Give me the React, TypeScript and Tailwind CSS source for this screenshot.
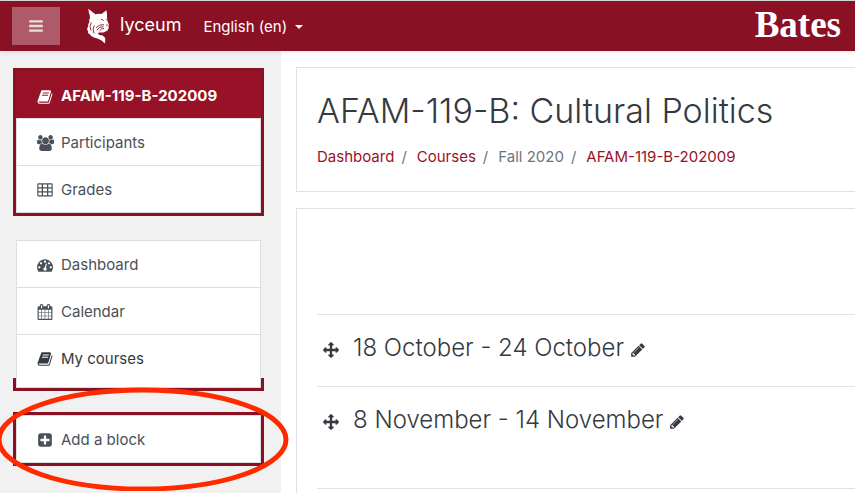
import { ReactNode } from "react";
import clsx from "clsx";

const ICONS = {
   book: "M1703 478q40 57 18 129l-275 906q-19 64-76.5 107.5t-122.5 43.5h-923q-77 0-148.5-53.5t-99.5-131.5q-24-67-2-127 0-4 3-27t4-37q1-8-3-21.5t-3-19.5q2-11 8-21t16.5-23.5 16.5-23.5q23-38 45-91.5t30-91.5q3-10 .5-30t-.5-28q3-11 17-28t17-23q21-36 42-92t25-90q1-9-2.5-32t.5-28q4-13 22-30.5t22-22.5q19-26 42.5-84.5t27.5-96.5q1-8-3-25.5t-2-26.5q2-8 9-18t18-23 17-21q8-12 16.5-30.5t15-35 16-36 19.5-32 26.5-23.5 36-11.5 47.5 5.5l-1 3q38-9 51-9h761q74 0 114 56t18 130l-274 906q-36 119-71.5 153.5t-128.5 34.5h-869q-27 0-38 15-11 16-1 43 24 70 144 70h923q29 0 56-15.5t35-41.5l300-987q7-22 5-57 38 15 59 43zm-1064 2q-4 13 2 22.5t20 9.5h608q13 0 25.5-9.5t16.5-22.5l21-64q4-13-2-22.5t-20-9.5h-608q-13 0-25.5 9.5t-16.5 22.5zm-83 256q-4 13 2 22.5t20 9.5h608q13 0 25.5-9.5t16.5-22.5l21-64q4-13-2-22.5t-20-9.5h-608q-13 0-25.5 9.5t-16.5 22.5z",
   users: "M593 896q-162 5-265 128h-134q-82 0-138-40.5t-56-118.5q0-353 124-353 6 0 43.5 21t97.5 42.5 119 21.5q67 0 133-23-5 37-5 66 0 159 93 293zm1071 637q0 120-73 189.5t-194 69.5h-874q-121 0-194-69.5t-73-189.5q0-53 3.5-103.5t14-109 26.5-108.5 43-97.5 62-81 85.5-53.5 111.5-20q10 0 43 21.5t73 48 107 48 135 21.5 135-21.5 107-48 73-48 43-21.5q61 0 111.5 20t85.5 53.5 62 81 43 97.5 26.5 108.5 14 109 3.5 103.5zm-1024-1277q0 106-75 181t-181 75-181-75-75-181 75-181 181-75 181 75 75 181zm704 384q0 159-112.5 271.5t-271.5 112.5-271.5-112.5-112.5-271.5 112.5-271.5 271.5-112.5 271.5 112.5 112.5 271.5zm576 225q0 78-56 118.5t-138 40.5h-134q-103-123-265-128 93-134 93-293 0-29-5-66 66 23 133 23 59 0 119-21.5t97.5-42.5 43.5-21q124 0 124 353zm-128-609q0 106-75 181t-181 75-181-75-75-181 75-181 181-75 181 75 75 181z",
   table: "M160 128h1472q128 0 128 128v1248q0 128-128 128h-1472q-128 0-128-128v-1248q0-128 128-128zM160 288v304h368v-304zM672 288v304h448v-304zM1264 288v304h368v-304zM160 728v304h368v-304zM672 728v304h448v-304zM1264 728v304h368v-304zM160 1168v304h368v-304zM672 1168v304h448v-304zM1264 1168v304h368v-304z",
   tachometer: "M384 1152q0-53-37.5-90.5t-90.5-37.5-90.5 37.5-37.5 90.5 37.5 90.5 90.5 37.5 90.5-37.5 37.5-90.5zm192-448q0-53-37.5-90.5t-90.5-37.5-90.5 37.5-37.5 90.5 37.5 90.5 90.5 37.5 90.5-37.5 37.5-90.5zm428 481l101-382q6-26-7.5-48.5t-38.5-29.5-48 6.5-30 39.5l-101 382q-60 5-107 43.5t-63 98.5q-20 77 20 146t117 89 146-20 89-117q16-60-6-117t-72-91zm660-33q0-53-37.5-90.5t-90.5-37.5-90.5 37.5-37.5 90.5 37.5 90.5 90.5 37.5 90.5-37.5 37.5-90.5zm-640-640q0-53-37.5-90.5t-90.5-37.5-90.5 37.5-37.5 90.5 37.5 90.5 90.5 37.5 90.5-37.5 37.5-90.5zm448 192q0-53-37.5-90.5t-90.5-37.5-90.5 37.5-37.5 90.5 37.5 90.5 90.5 37.5 90.5-37.5 37.5-90.5zm320 448q0 261-141 483-19 29-54 29h-1402q-35 0-54-29-141-221-141-483 0-182 71-348t191-286 286-191 348-71 348 71 286 191 191 286 71 348z",
   calendar: "M192 1664h288v-288h-288v288zm352 0h320v-288h-320v288zm-352-352h288v-320h-288v320zm352 0h320v-320h-320v320zm-352-384h288v-288h-288v288zm736 736h320v-288h-320v288zm-384-736h320v-288h-320v288zm768 736h288v-288h-288v288zm-384-352h320v-320h-320v320zm-352-864v-288q0-13-9.5-22.5t-22.5-9.5h-64q-13 0-22.5 9.5t-9.5 22.5v288q0 13 9.5 22.5t22.5 9.5h64q13 0 22.5-9.5t9.5-22.5zm736 864h288v-320h-288v320zm-384-384h320v-288h-320v288zm384 0h288v-288h-288v288zm32-480v-288q0-13-9.5-22.5t-22.5-9.5h-64q-13 0-22.5 9.5t-9.5 22.5v288q0 13 9.5 22.5t22.5 9.5h64q13 0 22.5-9.5t9.5-22.5zm384-64v1280q0 52-38 90t-90 38h-1408q-52 0-90-38t-38-90v-1280q0-52 38-90t90-38h128v-96q0-66 47-113t113-47h64q66 0 113 47t47 113v96h384v-96q0-66 47-113t113-47h64q66 0 113 47t47 113v96h128q52 0 90 38t38 90z",
   plusSquare: "M1408 960v-128q0-26-19-45t-45-19h-320v-320q0-26-19-45t-45-19h-128q-26 0-45 19t-19 45v320h-320q-26 0-45 19t-19 45v128q0 26 19 45t45 19h320v320q0 26 19 45t45 19h128q26 0 45-19t19-45v-320h320q26 0 45-19t19-45zm256-544v960q0 119-84.5 203.5t-203.5 84.5h-960q-119 0-203.5-84.5t-84.5-203.5v-960q0-119 84.5-203.5t203.5-84.5h960q119 0 203.5 84.5t84.5 203.5z",
   pencil: "M491 1536l91-91-235-235-91 91v107h128v128h107zm523-928q0-22-22-22-10 0-17 7l-542 542q-7 7-7 17 0 22 22 22 10 0 17-7l542-542q7-7 7-17zm-54-192l416 416-832 832h-416v-416zm683 96q0 53-37 90l-166 166-416-416 166-165q36-38 90-38 53 0 91 38l235 234q37 39 37 91z",
   arrows: "M1792 896q0 26-19 45l-256 256q-19 19-45 19t-45-19-19-45v-128h-384v384h128q26 0 45 19t19 45-19 45l-256 256q-19 19-45 19t-45-19l-256-256q-19-19-19-45t19-45 45-19h128v-384h-384v128q0 26-19 45t-45 19-45-19l-256-256q-19-19-19-45t19-45l256-256q19-19 45-19t45 19 19 45v128h384v-384h-128q-26 0-45-19t-19-45 19-45l256-256q19-19 45-19t45 19l256 256q19 19 19 45t-19 45-45 19h-128v384h384v-128q0-26 19-45t45-19 45 19l256 256q19 19 19 45z",
   bars: "M1664 1344v128q0 26-19 45t-45 19h-1408q-26 0-45-19t-19-45v-128q0-26 19-45t45-19h1408q26 0 45 19t19 45zm0-512v128q0 26-19 45t-45 19h-1408q-26 0-45-19t-19-45v-128q0-26 19-45t45-19h1408q26 0 45 19t19 45zm0-512v128q0 26-19 45t-45 19h-1408q-26 0-45-19t-19-45v-128q0-26 19-45t45-19h1408q26 0 45 19t19 45z",
};

type IconName = keyof typeof ICONS;

function Icon({ name, className }: { name: IconName; className?: string }) {
   return (
      <svg
         viewBox={name === "users" ? "0 0 1920 1792" : "0 0 1792 1792"}
         fill="currentColor"
         fillRule={name === "table" ? "evenodd" : "nonzero"}
         className={clsx("shrink-0", className)}
         aria-hidden="true"
      >
         <path d={ICONS[name]} />
      </svg>
   );
}

function BobcatLogo() {
   return (
      <svg viewBox="0 0 24 36" className="h-9 w-6 shrink-0" aria-hidden="true">
         <path
            fill="#fff"
            d="M2.3 .8L9.300 6.200Q12.500 5.500 15.500 6L20.500 2.200Q21.300 6 21 9.500L21.400 13L22.900 16.500L22.300 19L23 19.300L21.500 22.600L17.500 24.600L13 24.400L11.800 25.600Q13 27.500 16.500 27.600Q19.700 29.500 19.300 32L18.800 35.500Q16 32 11.500 30.600Q5.500 29.500 3 25.500L1.800 25.200L2.200 23.500Q.8 22 1.200 19.500L2 19.600Q1.500 16.500 3.800 13L2.800 13.200Q4.800 10 3.700 7Q2.500 4 2.300 .8Z"
         />
         <g fill="none" stroke="#8a1024" strokeWidth="0.9">
            <path d="M15 11.200l2.600 1.300M20.300 11.800l1-.8" />
            <path d="M5.300 14.500q-2.300 4-.3 8M8.300 17.500Q6 21 8 25.500" />
            <path d="M18 16.700q-5-.5-8 3M17.500 18.600q-4.500 0-6.700 3.600M18 20.400q-3 .3-4.500 2.500M20 17.300l1.800-.4" />
         </g>
      </svg>
   );
}

function NavItem({ icon, className, children }: { icon: IconName; className?: string; children: ReactNode }) {
   return (
      <li>
         <a
            href="#"
            className={clsx(
               "flex h-[47px] items-center gap-2 border-t border-[#dedede] px-5 text-[15px]",
               className ?? "pt-0.5",
            )}
         >
            <span className="flex w-4 justify-center">
               <Icon name={icon} className={icon === "users" ? "h-4 w-[17px]" : "size-4"} />
            </span>
            {children}
         </a>
      </li>
   );
}

function Section({ title }: { title: string }) {
   return (
      <li className="flex h-[72px] items-start border-t border-[#dee2e6] pt-[17px]">
         <button type="button" aria-label={`Move ${title}`} className="mt-2.5 mr-3.5 ml-1.5">
            <Icon name="arrows" className="size-4" />
         </button>
         <h3 className="text-2xl leading-8 font-light">{title}</h3>
         <button type="button" aria-label={`Edit ${title}`} className="mt-2.5 ml-1.5">
            <Icon name="pencil" className="size-4" />
         </button>
      </li>
   );
}

function Sidebar() {
   return (
      <aside className="w-[281px] shrink-0 bg-[#f1f1f1] px-[13px] pt-[17px] text-[#495057]">
         <nav aria-label="Course" className="mr-1 border-3 border-[#8a1024] bg-white">
            <ul className="border-x border-b border-[#dedede]">
               <NavItem
                  icon="book"
                  className="-mx-px border-x border-t-0 border-x-[#981227] bg-[#981227] pt-1 font-bold text-white"
               >
                  AFAM-119-B-202009
               </NavItem>
               <NavItem icon="users">Participants</NavItem>
               <NavItem icon="table">Grades</NavItem>
            </ul>
         </nav>

         <nav aria-label="Site" className="relative mt-6 mr-1 px-[3px] pb-[3px]">
            <div className="absolute inset-x-0 bottom-0 h-[13px] border-3 border-t-0 border-[#8a1024]" />
            <ul className="relative border-x border-b border-[#dedede] bg-white pb-1.5">
               <NavItem icon="tachometer">Dashboard</NavItem>
               <NavItem icon="calendar">Calendar</NavItem>
               <NavItem icon="book" className="pt-0.5 text-[#343a40]">
                  My courses
               </NavItem>
            </ul>
         </nav>

         <nav aria-label="Blocks" className="relative mt-[21px] mr-1 border-3 border-[#8a1024] bg-white">
            <ul className="border-x border-b border-[#dedede]">
               <NavItem icon="plusSquare">Add a block</NavItem>
            </ul>
            <svg
               viewBox="0 0 294 104"
               className="pointer-events-none absolute -top-7 -left-5 h-[104px] w-[294px] max-w-none"
               aria-hidden="true"
            >
               <ellipse cx="146.5" cy="52.5" rx="143.5" ry="49.5" fill="none" stroke="#ff2a00" strokeWidth="5" />
            </svg>
         </nav>
      </aside>
   );
}

export default function App() {
   return (
      <div className="flex min-h-screen flex-col overflow-hidden bg-white font-['Inter',sans-serif] text-[#343a40]">
         <header className="relative flex h-[51px] items-center border-t border-[#d5d5d5] bg-[#8a1024] px-3 text-white shadow-[0_2px_4px_rgba(0,0,0,0.08)]">
            <button
               type="button"
               aria-label="Side panel"
               className="flex h-[38px] w-12 items-center justify-center bg-[#ae5a68] text-[#eadde0]"
            >
               <Icon name="bars" className="size-4" />
            </button>
            <a href="#" className="ml-[26px] flex items-center gap-2.5 text-lg">
               <BobcatLogo />
               <span className="pb-0.5">lyceum</span>
            </a>
            <button type="button" className="mt-0.5 ml-[22px] flex items-center gap-2 text-[15px]">
               English (en)
               <span className="border-x-4 border-t-4 border-x-transparent border-t-white" />
            </button>
            <a href="#" className="mr-0.5 mb-0.5 ml-auto font-['Liberation_Serif',serif] text-[37px] font-bold">
               Bates
            </a>
         </header>

         <div className="flex flex-1">
            <Sidebar />

            <main className="flex min-w-0 flex-1 flex-col gap-4 pt-4 pl-[15px]">
               <div className="h-[125px] border-y border-l border-[#dee2e6] px-5 pt-5">
                  <h1 className="text-[34px] leading-[46px] font-light">AFAM-119-B: Cultural Politics</h1>
                  <nav aria-label="Breadcrumb" className="mt-[11px]">
                     <ol className="flex gap-[7px] text-[15px] leading-6 text-[#6c757d]">
                        <li>
                           <a href="#" className="text-[#981227]">
                              Dashboard
                           </a>
                        </li>
                        <li className="flex gap-2.5 before:content-['/']">
                           <a href="#" className="text-[#981227]">
                              Courses
                           </a>
                        </li>
                        <li className="flex gap-2.5 before:content-['/']">Fall 2020</li>
                        <li className="flex gap-2.5 before:content-['/']">
                           <a href="#" className="text-[#981227]">
                              AFAM-119-B-202009
                           </a>
                        </li>
                     </ol>
                  </nav>
               </div>

               <div className="flex-1 border-t border-l border-[#dee2e6] pt-[105px] pl-5">
                  <ul>
                     <Section title="18 October - 24 October" />
                     <Section title="8 November - 14 November" />
                     <li className="mt-[30px] border-t border-[#dee2e6]" />
                  </ul>
               </div>
            </main>
         </div>
      </div>
   );
}
